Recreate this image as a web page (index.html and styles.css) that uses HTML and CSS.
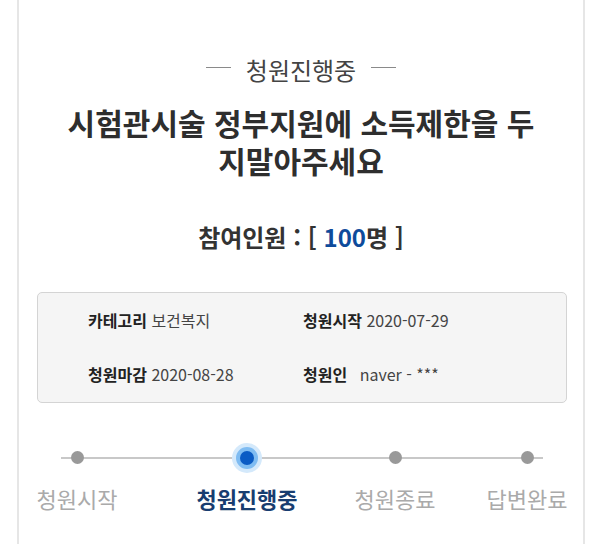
FILE: index.html
```html
<!DOCTYPE html>
<html lang="ko">
<head>
<meta charset="utf-8">
<link rel="stylesheet" href="styles.css">
</head>
<body>
<div class="card">
  <div class="status"><span class="dash"></span><span class="status-text">청원진행중</span><span class="dash"></span></div>
  <h1 class="title"><span class="title-line">시험관시술 정부지원에 소득제한을 두</span><span class="title-line">지말아주세요</span></h1>
  <div class="count">참여인원 : [ <span class="num">100</span>명 ]</div>
  <div class="info">
    <div class="item"><b class="label">카테고리</b> <span class="value">보건복지</span></div>
    <div class="item"><b class="label">청원시작</b> <span class="value">2020-07-29</span></div>
    <div class="item"><b class="label">청원마감</b> <span class="value">2020-08-28</span></div>
    <div class="item"><b class="label">청원인</b> <span class="value wide">naver - ***</span></div>
  </div>
  <div class="steps">
    <div class="step s1"><span class="dot"></span><span class="step-label">청원시작</span></div>
    <div class="step s2 active"><span class="dot"></span><span class="step-label">청원진행중</span></div>
    <div class="step s3"><span class="dot"></span><span class="step-label">청원종료</span></div>
    <div class="step s4"><span class="dot"></span><span class="step-label">답변완료</span></div>
  </div>
</div>
</body>
</html>
```
FILE: styles.css
```css
html, body {
  margin: 0;
  padding: 0;
  background: #fff;
}
body {
  font-family: "Noto Sans CJK KR", "Noto Sans", sans-serif;
  color: #333;
}
.card {
  box-sizing: border-box;
  margin-left: 17px;
  width: 568px;
  min-height: 560px;
  border-left: 2px solid #e6e6e6;
  border-right: 2px solid #e6e6e6;
  padding-top: 55px;
}
.status {
  display: flex;
  justify-content: center;
  align-items: center;
  height: 30px;
  gap: 15px;
}
.dash {
  width: 25px;
  border-top: 1px solid #8a8a8a;
  margin-bottom: 6px;
}
.status-text {
  font-size: 24px;
  line-height: 30px;
  color: #444;
}
.title {
  margin: 18px 0 0;
  text-align: center;
  font-size: 30px;
  line-height: 38px;
  font-weight: 700;
  color: #2e2e2e;
}
.title-line {
  display: block;
  height: 38px;
}
.count {
  margin-top: 41px;
  text-align: center;
  font-size: 24px;
  line-height: 34px;
  font-weight: 700;
  color: #333;
}
.num {
  color: #0e4b9b;
}
.info {
  margin: 38px 16px 0 18px;
  box-sizing: border-box;
  height: 111px;
  background: #f5f5f5;
  border: 1px solid #d4d4d4;
  border-radius: 5px;
  padding: 16px 0 0 50px;
  display: grid;
  grid-template-columns: 215px 1fr;
  row-gap: 32px;
  align-content: start;
}
.item {
  font-size: 16px;
  line-height: 22px;
  white-space: nowrap;
}
.label {
  font-weight: 700;
  color: #222;
}
.value {
  color: #444;
}
.value.wide {
  margin-left: 8px;
}
.steps {
  margin-top: 40px;
  display: flex;
  background: linear-gradient(#c8c8c8, #c8c8c8) no-repeat;
  background-size: 482px 2px;
  background-position: 42px 14px;
}
.step {
  width: 110px;
  display: flex;
  flex-direction: column;
  align-items: center;
}
.s1 { margin-left: 3px; }
.s2 { margin-left: 60px; }
.s3 { margin-left: 38px; }
.s4 { margin-left: 22px; }
.dot {
  display: block;
  width: 13px;
  height: 13px;
  margin: 8px 0 9px;
  border-radius: 50%;
  background: #999;
}
.step.active .dot {
  width: 14px;
  height: 14px;
  margin: 8px 0;
  background: #0a5bc4;
  box-shadow: 0 0 0 4px #7fbcf2, 0 0 0 8px #d4e9fb;
}
.step-label {
  margin-top: 11px;
  font-size: 22px;
  line-height: 28px;
  color: #aaa;
  white-space: nowrap;
}
.step.active .step-label {
  font-weight: 700;
  color: #183d70;
}
```
